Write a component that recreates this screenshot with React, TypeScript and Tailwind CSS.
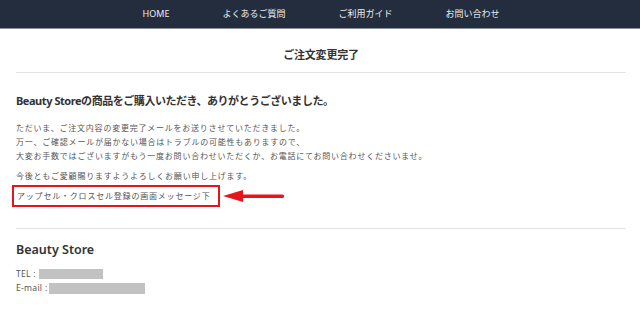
const navItems = ["HOME", "よくあるご質問", "ご利用ガイド", "お問い合わせ"];

const bodyLines = [
  "ただいま、ご注文内容の変更完了メールをお送りさせていただきました。",
  "万一、ご確認メールが届かない場合はトラブルの可能性もありますので、",
  "大変お手数ではございますがもう一度お問い合わせいただくか、お電話にてお問い合わせくださいませ。",
];

function Arrow() {
  return (
    <svg width="62" height="14" viewBox="0 0 62 14" className="ml-[3px]">
      <polygon points="0,7 20,1 20,13" fill="#e8141b" />
      <rect x="18" y="5.5" width="43" height="3.5" rx="1.5" fill="#e8141b" />
    </svg>
  );
}

export default function App() {
  return (
    <div
      className="h-[312px] w-[640px] overflow-hidden bg-white text-[#333]"
      style={{ fontFamily: '"Noto Sans", "Noto Sans CJK JP", sans-serif' }}
    >
      <nav className="flex h-[29px] items-center justify-center gap-[53px] border-b border-[#8a919b] bg-[#232d3e] pl-[2px] text-[9px] text-[#e9ecef]">
        {navItems.map((item) => (
          <span key={item}>{item}</span>
        ))}
      </nav>

      <div className="ml-4 mr-[14px]">
        <h1 className="border-b border-[#e3e3e3] pb-[9px] pt-[18px] text-center text-[11px] leading-4 font-bold tracking-[-0.2px] text-[#333]">
          ご注文変更完了
        </h1>

        <section className="border-b border-[#e3e3e3] pb-[21px]">
          <h2 className="mt-5 text-[11px] leading-4 font-bold tracking-[-0.45px] text-[#333]">
            Beauty Storeの商品をご購入いただき、ありがとうございました。
          </h2>
          <div className="mt-3 text-[8px] leading-[14px] tracking-[0.77px] text-[#555]">
            {bodyLines.map((line) => (
              <p key={line}>{line}</p>
            ))}
          </div>
          <p className="mt-1.5 text-[8px] leading-[14px] tracking-[0.77px] text-[#555]">
            今後ともご愛顧賜りますようよろしくお願い申し上げます。
          </p>
          <div className="mt-[2px] flex items-center">
            <div className="-ml-1 flex h-[22px] w-[208px] items-center border-2 border-[#e8141b] pl-[3px] text-[8px] tracking-[0.8px] text-[#555]">
              アップセル・クロスセル登録の画面メッセージ下
            </div>
            <Arrow />
          </div>
        </section>

        <section className="pt-3">
          <h3 className="text-[12.5px] leading-[18px] font-semibold text-[#333]">Beauty Store</h3>
          <div className="mt-2 text-[8.5px] leading-[14px] tracking-[0.3px] text-[#555]">
            <div className="flex items-center">
              <span>TEL :</span>
              <span className="ml-[3px] h-[10px] w-[64px] bg-[#c2c2c2]" />
            </div>
            <div className="flex items-center">
              <span>E-mail :</span>
              <span className="ml-[2px] h-[11px] w-[96px] bg-[#c2c2c2]" />
            </div>
          </div>
        </section>
      </div>
    </div>
  );
}
